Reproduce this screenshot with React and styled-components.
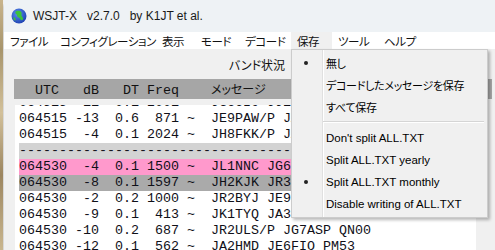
import styled, { createGlobalStyle } from 'styled-components'

const ui = '"Liberation Sans", "Noto Sans CJK JP", sans-serif'
const jp = '"Noto Sans CJK JP", "Liberation Sans", sans-serif'
const mono = '"Liberation Mono", "Noto Sans CJK JP", monospace'

const GlobalStyle = createGlobalStyle`
  html, body {
    margin: 0;
    padding: 0;
    width: 495px;
    height: 250px;
    overflow: hidden;
    background: #f0f0f0;
  }
`

const menus = [
    { label: 'ファイル', w: 50 },
    { label: 'コンフィグレーション', w: 102 },
    { label: '表示', w: 39 },
    { label: 'モード', w: 44 },
    { label: 'デコード', w: 52 },
    { label: '保存', w: 41, open: true },
    { label: 'ツール', w: 46 },
    { label: 'ヘルプ', w: 50 },
]

const saveItems = [
    { label: '無し', checked: true, jp: true },
    { label: 'デコードしたメッセージを保存', jp: true },
    { label: 'すべて保存', jp: true },
    { sep: true },
    { label: "Don't split ALL.TXT" },
    { label: 'Split ALL.TXT yearly' },
    { label: 'Split ALL.TXT monthly', checked: true },
    { label: 'Disable writing of ALL.TXT' },
]

const rows = [
    { text: '064515 -11  0.1 2001 ~  JG6CIO JJ1MZE PM95' },
    { text: '064515 -13  0.6  871 ~  JE9PAW/P JA1XYZ R-08' },
    { text: '064515  -4  0.1 2024 ~  JH8FKK/P JA7QVI -07' },
    { text: '-'.repeat(60), bg: '#d3d3d3' },
    { text: '064530  -4  0.1 1500 ~  JL1NNC JG6DFK RR73', bg: '#ff99cc' },
    { text: '064530  -8  0.1 1597 ~  JH2KJK JR3UIC PM74', bg: '#aaaaaa' },
    { text: '064530  -2  0.2 1000 ~  JR2BYJ JE9DJU R-11' },
    { text: '064530  -9  0.1  413 ~  JK1TYQ JA3LRZ R-06' },
    { text: '064530 -10  0.2  687 ~  JR2ULS/P JG7ASP QN00' },
    { text: '064530 -12  0.1  562 ~  JA2HMD JE6FIO PM53' },
]

function Globe() {
    return (
        <svg width="16" height="16" viewBox="0 0 16 16">
            <defs>
                <radialGradient id="sea" cx="0.4" cy="0.35" r="0.7">
                    <stop offset="0" stopColor="#5b8ff0" />
                    <stop offset="1" stopColor="#1d3fb0" />
                </radialGradient>
            </defs>
            <circle cx="8" cy="8" r="7.5" fill="url(#sea)" />
            <path d="M5 3.2 C7 2.4 9.5 2.8 10.4 4.2 C11.2 5.6 10 6.4 10.6 7.8 C11.2 9.4 12.6 9.6 12 11.4 C11.2 12.8 9.6 12.2 9.2 11 C8.8 9.8 7.4 9.6 6.6 8.8 C5.8 8 6.4 6.8 5.4 6.2 C4.4 5.6 3.8 4.2 5 3.2 Z" fill="#3cc23c" />
            <path d="M2.4 9.4 C3.4 9.2 4.4 10 4.6 11.2 C4.8 12.2 4 12.8 3.4 12.2 C2.8 11.4 2.2 10.4 2.4 9.4 Z" fill="#3cc23c" />
        </svg>
    )
}

function App() {
    return (
        <>
            <GlobalStyle />
            <Screen>
                <Desktop />
                <Window>
                    <TitleBar>
                        <Globe />
                        <Title>WSJT-X   v2.7.0   by K1JT et al.</Title>
                    </TitleBar>
                    <MenuBar>
                        {menus.map((m) => (
                            <MenuItem key={m.label} $w={m.w} $active={m.open}>
                                {m.label}
                                {m.open && (
                                    <Dropdown>
                                        {saveItems.map((it, i) =>
                                            it.sep ? (
                                                <Separator key={i} />
                                            ) : (
                                                <DropItem key={i}>
                                                    <Check>{it.checked && <Bullet />}</Check>
                                                    <DropLabel $jp={it.jp}>{it.label}</DropLabel>
                                                </DropItem>
                                            )
                                        )}
                                    </Dropdown>
                                )}
                            </MenuItem>
                        ))}
                    </MenuBar>
                    <Body>
                        <BandLabel>バンド状況</BandLabel>
                        <Header>
                            {'  UTC   dB   DT Freq    '}
                            <HeaderJp>メッセージ</HeaderJp>
                        </Header>
                        <TextEdit>
                            <Rows>
                                <RowList>
                                    {rows.map((r, i) => (
                                        <Row key={i} $bg={r.bg}>{r.text}</Row>
                                    ))}
                                </RowList>
                            </Rows>
                            <ScrollTrack />
                        </TextEdit>
                    </Body>
                </Window>
            </Screen>
        </>
    )
}

const Screen = styled.div`
    display: flex;
    width: 495px;
    height: 250px;
    overflow: hidden;
`
const Desktop = styled.div`
    width: 3px;
    flex-shrink: 0;
    background: linear-gradient(180deg, #c8b48c 0%, #a8956c 20%, #d2c09a 45%, #9c8660 70%, #c9b68f 100%);
`
const Window = styled.div`
    flex: 1;
    min-width: 0;
    display: flex;
    flex-direction: column;
    background: #f0f0f0;
    border-top-left-radius: 7px;
    border-left: 1px solid #d8d8d8;
`
const TitleBar = styled.div`
    height: 32px;
    flex-shrink: 0;
    display: flex;
    align-items: center;
    gap: 6px;
    padding-left: 7px;
    background: #eef2f5;
`
const Title = styled.span`
    font-family: ${ui};
    font-size: 12px;
    color: #1a1a1a;
    white-space: pre;
`
const MenuBar = styled.div`
    height: 17px;
    flex-shrink: 0;
    display: flex;
    background: #ffffff;
`
const MenuItem = styled.div`
    position: relative;
    width: ${(p) => p.$w}px;
    flex-shrink: 0;
    box-sizing: border-box;
    padding-left: 6px;
    display: flex;
    align-items: center;
    white-space: nowrap;
    font-family: ${jp};
    font-size: 11.5px;
    letter-spacing: -0.4px;
    font-feature-settings: "palt" 1;
    color: #111;
    background: ${(p) => (p.$active ? '#f0f0f0' : 'transparent')};
`
const Dropdown = styled.div`
    position: absolute;
    top: 100%;
    left: 0;
    z-index: 10;
    width: 197px;
    box-sizing: border-box;
    padding: 2px 0;
    border: 1px solid #cccccc;
    letter-spacing: 0;
    background: linear-gradient(to right, #f0f0f0 30px, #e0e0e0 30px, #e0e0e0 31px, #ffffff 31px, #ffffff 32px, #f0f0f0 32px);
    box-shadow: 2px 2px 3px rgba(0, 0, 0, 0.28);
`
const DropItem = styled.div`
    height: 22px;
    display: flex;
    align-items: center;
    white-space: nowrap;
    color: #000;
`
const DropLabel = styled.span`
    font-family: ${(p) => (p.$jp ? jp : ui)};
    font-size: ${(p) => (p.$jp ? '11px' : '11.5px')};
    letter-spacing: ${(p) => (p.$jp ? '-0.3px' : '0')};
    font-feature-settings: "palt" 1;
`
const Check = styled.span`
    width: 34px;
    flex-shrink: 0;
    display: flex;
    justify-content: center;
    padding-right: 6px;
    box-sizing: border-box;
`
const Bullet = styled.span`
    width: 4px;
    height: 4px;
    border-radius: 50%;
    background: #222;
`
const Separator = styled.div`
    height: 1px;
    margin: 3px 3px 4px 31px;
    background: #d5d5d5;
    border-bottom: 1px solid #ffffff;
`
const Body = styled.div`
    flex: 1;
    min-width: 0;
    display: flex;
    flex-direction: column;
    padding: 8px 0 0 10px;
    overflow: hidden;
`
const BandLabel = styled.div`
    width: 478px;
    height: 16px;
    line-height: 16px;
    padding-left: 8px;
    box-sizing: border-box;
    text-align: center;
    font-family: ${jp};
    font-size: 12px;
    font-feature-settings: "palt" 1;
    color: #111;
`
const Header = styled.div`
    width: 478px;
    height: 20px;
    flex-shrink: 0;
    margin-top: 6px;
    box-sizing: border-box;
    padding-left: 5px;
    background: #a6a6a6;
    font-family: ${mono};
    font-size: 13.33px;
    line-height: 20px;
    white-space: pre;
    color: #111;
`
const HeaderJp = styled.span`
    font-family: ${jp};
    font-size: 12px;
    font-feature-settings: "palt" 1;
`
const TextEdit = styled.div`
    width: 478px;
    height: 160px;
    flex-shrink: 0;
    margin: 6px 0 0 1px;
    display: flex;
    background: #ffffff;
`
const Rows = styled.div`
    flex: 1;
    min-width: 0;
    overflow: hidden;
    padding-left: 4px;
`
const RowList = styled.div`
    margin-top: -10px;
`
const Row = styled.div`
    height: 16px;
    line-height: 16px;
    background: ${(p) => p.$bg || 'transparent'};
    font-family: ${mono};
    font-size: 13.33px;
    white-space: pre;
    color: #101018;
    overflow: hidden;
`
const ScrollTrack = styled.div`
    width: 17px;
    flex-shrink: 0;
    background: #f0f0f0;
`

export default App
